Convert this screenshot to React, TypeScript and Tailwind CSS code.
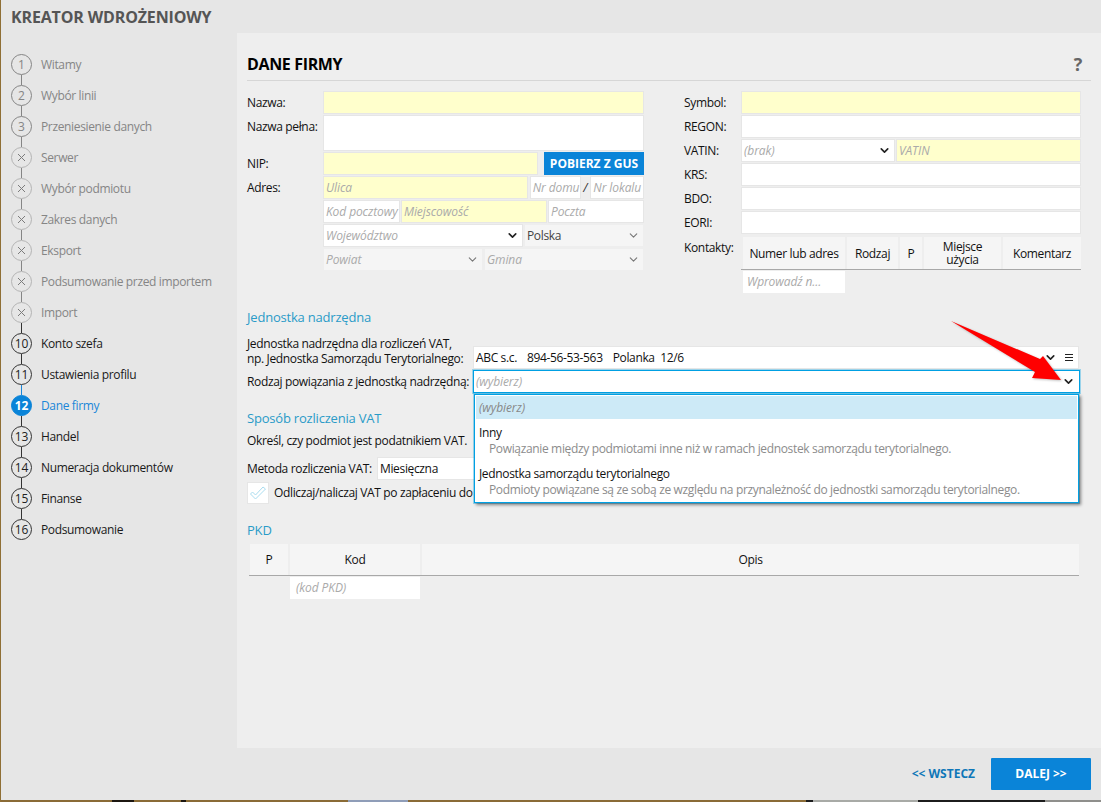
import { ChevronDown } from "lucide-react";

const font = "font-['Open_Sans',_'Noto_Sans',sans-serif]";

const steps = [
  { n: "1", label: "Witamy", kind: "done" },
  { n: "2", label: "Wybór linii", kind: "done" },
  { n: "3", label: "Przeniesienie danych", kind: "done" },
  { n: "x", label: "Serwer", kind: "off" },
  { n: "x", label: "Wybór podmiotu", kind: "off" },
  { n: "x", label: "Zakres danych", kind: "off" },
  { n: "x", label: "Eksport", kind: "off" },
  { n: "x", label: "Podsumowanie przed importem", kind: "off" },
  { n: "x", label: "Import", kind: "off" },
  { n: "10", label: "Konto szefa", kind: "todo" },
  { n: "11", label: "Ustawienia profilu", kind: "todo" },
  { n: "12", label: "Dane firmy", kind: "active" },
  { n: "13", label: "Handel", kind: "todo" },
  { n: "14", label: "Numeracja dokumentów", kind: "todo" },
  { n: "15", label: "Finanse", kind: "todo" },
  { n: "16", label: "Podsumowanie", kind: "todo" },
];

function Step({ n, label, kind, last, nextActive }: { n: string; label: string; kind: string; last: boolean; nextActive: boolean }) {
  const circle =
    kind === "active"
      ? "bg-[#0a84d8] border-[#0a84d8] text-white font-bold"
      : kind === "todo"
        ? "border-[#333333] text-[#222222]"
        : kind === "done"
          ? "border-[#858585] text-[#858585]"
          : "border-[#b4b4b4] text-[#7c7c7c]";
  const text = kind === "active" ? "text-[#1a86d8]" : kind === "todo" ? "text-[#1a1a1a]" : "text-[#858585]";
  const line = nextActive ? "bg-[#1a86d8]" : kind === "todo" || kind === "active" || label === "Import" ? "bg-[#333333]" : "bg-[#858585]";
  return (
    <div className="flex h-[31px] gap-[9px]">
      <div className="flex w-[21px] flex-col items-center">
        <div className={`flex h-[21px] w-[21px] shrink-0 items-center justify-center rounded-full border text-[12px] leading-none tracking-normal ${circle}`}>
          {n === "x" ? (
            <svg width="9" height="9" viewBox="0 0 9 9" className="stroke-[#7c7c7c]">
              <path d="M1 1l7 7M8 1l-7 7" fill="none" strokeWidth="1" />
            </svg>
          ) : (
            n
          )}
        </div>
        {!last && <div className={`h-[10px] w-px ${line}`} />}
      </div>
      <div className={`h-[21px] whitespace-nowrap text-[12px] leading-[21px] ${text}`}>{label}</div>
    </div>
  );
}

function Field({ className = "", yellow, hint }: { className?: string; yellow?: boolean; hint?: string }) {
  return (
    <div
      className={`h-[23px] truncate border border-[#e6e6e6] pl-[2px] text-[12px] italic leading-[21px] tracking-[-0.1px] text-[#aaaaaa] ${yellow ? "bg-[#ffffcc]" : "bg-white"} ${className}`}
    >
      {hint}
    </div>
  );
}

function Select({ className = "", hint, value, disabled }: { className?: string; hint?: string; value?: string; disabled?: boolean }) {
  return (
    <div
      className={`flex h-[23px] items-center justify-between border pl-[2px] pr-[3px] text-[12px] ${disabled ? "border-[#eeeeee] bg-[#f5f5f5]" : "border-[#e6e6e6] bg-white"} ${className}`}
    >
      {hint ? <span className="italic tracking-[-0.1px] text-[#aaaaaa]">{hint}</span> : <span className="text-[#444444]">{value}</span>}
      <ChevronDown size={13} strokeWidth={disabled ? 2 : 3} className={disabled ? "text-[#777777]" : "text-[#222222]"} />
    </div>
  );
}

function Row({ label, width, tight, children }: { label: string; width: string; tight?: boolean; children: React.ReactNode }) {
  return (
    <div className="flex">
      <div className={`shrink-0 whitespace-nowrap text-[12px] text-[#111111] ${tight ? "leading-[23px]" : "h-[23px] leading-[24px]"} ${width}`}>{label}</div>
      {children}
    </div>
  );
}

function SectionTitle({ children, className = "" }: { children: React.ReactNode; className?: string }) {
  return <div className={`text-[13px] leading-[18px] tracking-[-0.2px] text-[#2a9bc8] ${className}`}>{children}</div>;
}

function Th({ className = "", children }: { className?: string; children: React.ReactNode }) {
  return (
    <div className={`flex items-center justify-center bg-[#f5f5f5] text-center text-[12px] leading-[13px] text-[#111111] ${className}`}>
      {children}
    </div>
  );
}

export default function App() {
  return (
    <div className={`relative flex h-[802px] w-[1101px] flex-col overflow-hidden border-l border-l-[#8f6f35] bg-[#e6e6e6] tracking-[-0.35px] ${font}`}>
      <div className="h-[33px] shrink-0 pl-[10px] text-[16px] font-bold leading-[35px] tracking-[-0.15px] text-[#555555]">KREATOR WDROŻENIOWY</div>

      <div className="flex h-[715px] shrink-0">
        <aside className="w-[236px] shrink-0 pl-[10px] pt-[21px]">
          {steps.map((s, i) => (
            <Step key={i} {...s} last={i === steps.length - 1} nextActive={steps[i + 1]?.kind === "active"} />
          ))}
        </aside>

        <main className="relative flex-1 bg-[#eeeeee] pl-[10px] pr-[10px]">
          <div className="flex h-[48px] items-end justify-between border-b border-[#d6d6d6] pb-[5px]">
            <h1 className="text-[16px] font-bold leading-[22px] text-black">DANE FIRMY</h1>
            <span className="pr-[9px] text-[18px] font-bold leading-[22px] text-[#666666]">?</span>
          </div>

          <div className="mt-[10px] flex">
            <div className="flex w-[397px] shrink-0 flex-col gap-px">
              <Row label="Nazwa:" width="w-[76px]">
                <Field yellow className="w-[321px]" />
              </Row>
              <Row label="Nazwa pełna:" width="w-[76px]" tight>
                <Field className="h-[36px]! w-[321px]" />
              </Row>
              <Row label="NIP:" width="w-[76px]" tight>
                <Field yellow className="w-[215px]" />
                <button className="ml-[6px] h-[23px] w-[100px] bg-[#0a84d8] text-[12px] font-bold tracking-normal text-white">POBIERZ Z GUS</button>
              </Row>
              <Row label="Adres:" width="w-[76px]" tight>
                <div className="flex w-[321px] gap-[2px]">
                  <Field yellow hint="Ulica" className="w-[206px]" />
                  <Field hint="Nr domu" className="w-[52px]" />
                  <span className="w-[5px] text-[12px] italic leading-[23px] text-[#333333]">/</span>
                  <Field hint="Nr lokalu" className="w-[54px]" />
                </div>
              </Row>
              <div className="ml-[76px] flex w-[321px] gap-px">
                <Field hint="Kod pocztowy" className="w-[77px]" />
                <Field yellow hint="Miejscowość" className="w-[146px]" />
                <Field hint="Poczta" className="w-[96px]" />
              </div>
              <div className="ml-[76px] flex w-[321px] gap-px">
                <Select hint="Województwo" className="w-[200px]" />
                <Select value="Polska" disabled className="w-[120px]" />
              </div>
              <div className="ml-[76px] flex w-[321px] gap-px">
                <Select hint="Powiat" disabled className="w-[160px]" />
                <Select hint="Gmina" disabled className="w-[160px]" />
              </div>
            </div>

            <div className="ml-[40px] flex w-[397px] shrink-0 flex-col gap-px">
              <Row label="Symbol:" width="w-[57px]">
                <Field yellow className="w-[340px]" />
              </Row>
              <Row label="REGON:" width="w-[57px]">
                <Field className="w-[340px]" />
              </Row>
              <Row label="VATIN:" width="w-[57px]">
                <div className="flex w-[340px] gap-px">
                  <Select hint="(brak)" className="w-[154px]" />
                  <Field yellow hint="VATIN" className="w-[185px]" />
                </div>
              </Row>
              <Row label="KRS:" width="w-[57px]">
                <Field className="w-[340px]" />
              </Row>
              <Row label="BDO:" width="w-[57px]">
                <Field className="w-[340px]" />
              </Row>
              <Row label="EORI:" width="w-[57px]">
                <Field className="w-[340px]" />
              </Row>
              <Row label="Kontakty:" width="w-[57px] mt-px" tight>
                <div className="mt-[2px] w-[340px]">
                  <div className="flex h-[33px] gap-[2px] border-b border-[#a8a8a8] pl-[2px]">
                    <Th className="w-[102px]">Numer lub adres</Th>
                    <Th className="w-[51px]">Rodzaj</Th>
                    <Th className="w-[22px]">P</Th>
                    <Th className="w-[77px]">
                      Miejsce
                      <br />
                      użycia
                    </Th>
                    <Th className="w-[78px]">Komentarz</Th>
                  </div>
                  <div className="ml-[2px] mt-px h-[22px] w-[102px] truncate bg-white pl-[4px] text-[12px] italic leading-[22px] tracking-[-0.1px] text-[#aaaaaa]">Wprowadź n...</div>
                </div>
              </Row>
            </div>
          </div>

          <SectionTitle className="mt-[15px]">Jednostka nadrzędna</SectionTitle>
          <div className="mt-[10px] flex">
            <div className="w-[226px] shrink-0 whitespace-nowrap text-[12px] leading-[15px] text-[#111111]">
              Jednostka nadrzędna dla rozliczeń VAT,
              <br />
              np. Jednostka Samorządu Terytorialnego:
            </div>
            <div className="mt-[10px] flex h-[23px] w-[606px] items-center justify-between border border-[#e6e6e6] bg-white pl-[2px] pr-[5px] text-[12px] text-[#111111]">
              <span className="flex gap-[10px] whitespace-pre">
                <span>ABC s.c.</span>
                <span>894-56-53-563</span>
                <span>Polanka  12/6</span>
              </span>
              <span className="flex items-center gap-[8px]">
                <ChevronDown size={13} strokeWidth={3} className="text-[#222222]" />
                <svg width="8" height="7" viewBox="0 0 8 7" className="stroke-[#222222]">
                  <path d="M0 .5h8M0 3.5h8M0 6.5h8" fill="none" />
                </svg>
              </span>
            </div>
          </div>
          <div className="relative mt-px flex">
            <div className="w-[226px] shrink-0 whitespace-nowrap text-[12px] leading-[23px] text-[#111111]">Rodzaj powiązania z jednostką nadrzędną:</div>
            <div className="flex h-[23px] w-[607px] items-center justify-between border border-[#00a0e3] bg-white pl-[2px] pr-[4px] text-[12px] italic tracking-[-0.1px] text-[#aaaaaa] shadow-[0_0_0_1px_rgba(0,160,227,0.35)]">
              (wybierz)
              <ChevronDown size={13} strokeWidth={3} className="text-[#222222]" />
            </div>
            <div className="absolute left-[227px] top-[24px] z-10 h-[109px] w-[605px] border border-[#00a0e3] bg-white p-px shadow-[2px_2px_3px_rgba(0,0,0,0.45),0_0_0_1px_rgba(0,160,227,0.35)]">
              <div className="h-[23px] bg-[#cdeaf7] pl-[3px] text-[12px] italic leading-[23px] tracking-[-0.1px] text-[#888888]">(wybierz)</div>
              <div className="pl-[3px] pt-[6px] text-[12px] leading-[16px]">
                <div className="text-[#111111]">Inny</div>
                <div className="whitespace-nowrap pl-[10px] text-[#8c8c8c]">Powiązanie między podmiotami inne niż w ramach jednostek samorządu terytorialnego.</div>
              </div>
              <div className="pl-[3px] pt-[9px] text-[12px] leading-[16px]">
                <div className="text-[#111111]">Jednostka samorządu terytorialnego</div>
                <div className="whitespace-nowrap pl-[10px] text-[#8c8c8c]">Podmioty powiązane są ze sobą ze względu na przynależność do jednostki samorządu terytorialnego.</div>
              </div>
            </div>
          </div>

          <SectionTitle className="mt-[16px]">Sposób rozliczenia VAT</SectionTitle>
          <div className="mt-[4px] whitespace-nowrap text-[12px] leading-[20px] text-[#111111]">Określ, czy podmiot jest podatnikiem VAT.</div>
          <div className="mt-[6px] flex">
            <div className="w-[130px] shrink-0 whitespace-nowrap text-[12px] leading-[23px] text-[#111111]">Metoda rozliczenia VAT:</div>
            <div className="h-[23px] w-[200px] border border-[#e6e6e6] bg-white pl-[2px] text-[12px] leading-[21px] text-[#111111]">Miesięczna</div>
          </div>
          <div className="mt-px flex h-[23px] items-center gap-[5px]">
            <div className="flex h-[22px] w-[22px] items-center justify-center border border-[#e6e6e6] bg-white">
              <svg width="16" height="14" viewBox="0 0 16 14" className="fill-white stroke-[#a9dcef]">
                <path d="M.5 8 2.5 6 5.5 9 13 1 15.5 3 5.5 13z" strokeWidth="1" />
              </svg>
            </div>
            <span className="whitespace-nowrap text-[12px] text-[#111111]">Odliczaj/naliczaj VAT po zapłaceniu do</span>
          </div>

          <SectionTitle className="mt-[17px]">PKD</SectionTitle>
          <div className="ml-[2px] mt-[5px] w-[830px]">
            <div className="flex h-[32px] gap-[2px] border-b border-[#a8a8a8] pl-px">
              <Th className="w-[38px]">P</Th>
              <Th className="w-[130px]">Kod</Th>
              <Th className="flex-1">Opis</Th>
            </div>
            <div className="ml-[41px] mt-px h-[22px] w-[130px] bg-white pl-[6px] text-[12px] italic leading-[22px] tracking-[-0.1px] text-[#aaaaaa]">(kod PKD)</div>
          </div>
        </main>
      </div>

      <footer className="flex h-[52px] shrink-0 items-start justify-end gap-[16px] pr-[10px] pt-[10px]">
        <button className="h-[32px] text-[12px] font-bold tracking-normal text-[#0f77b8]">&lt;&lt; WSTECZ</button>
        <button className="h-[32px] w-[100px] rounded-[1px] bg-[#0a84d8] text-[12px] font-bold tracking-normal text-white">DALEJ &gt;&gt;</button>
      </footer>
      <div className="flex h-[2px] shrink-0 bg-[#8a6b36]">
        <div className="ml-[111px] w-[22px] bg-[#1c1610]" />
        <div className="ml-[47px] w-[5px] bg-[#1c1610]" />
        <div className="ml-[162px] w-[60px] bg-[#8f9db8]" />
        <div className="ml-[398px] w-[7px] bg-[#1c1c1c]" />
        <div className="w-[105px] bg-[#a8aaa6]" />
        <div className="w-[127px] bg-[#1c1c1c]" />
        <div className="flex-1 bg-[#8f8f8c]" />
      </div>

      <svg className="pointer-events-none absolute left-[940px] top-[315px] z-20 drop-shadow-[1px_1px_1px_rgba(0,0,0,0.25)]" width="130" height="75" viewBox="0 0 130 75">
        <polygon points="10,6 99,44 102,41 120,65 91,63 94,57" fill="#ff0000" />
      </svg>
    </div>
  );
}
